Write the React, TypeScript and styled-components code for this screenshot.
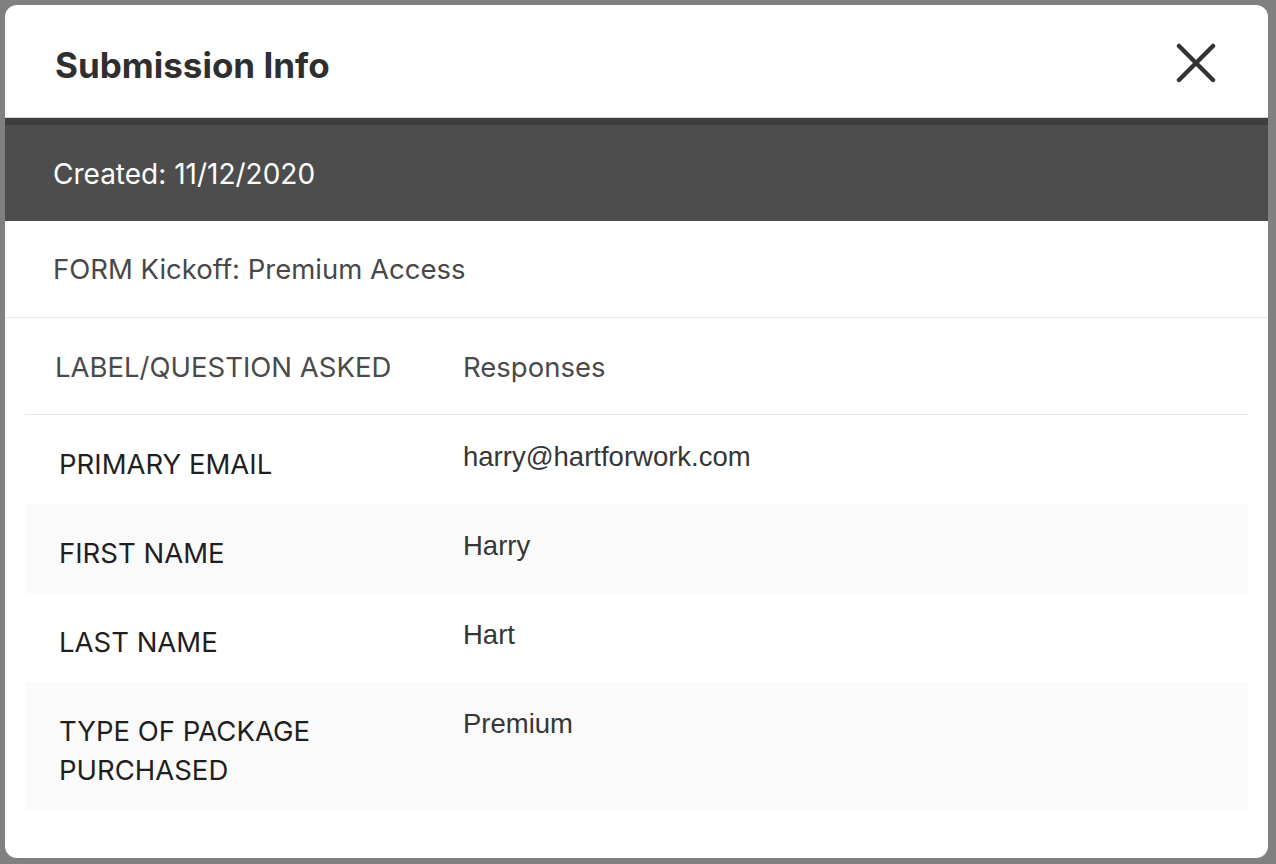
import React from "react";
import styled, { createGlobalStyle } from "styled-components";

const GlobalStyle = createGlobalStyle`
  html, body {
    margin: 0;
    padding: 0;
    background: #808080;
  }
  body {
    font-family: Inter, "Noto Sans", "Liberation Sans", sans-serif;
    -webkit-font-smoothing: antialiased;
  }
  * { box-sizing: border-box; }
`;

const Backdrop = styled.div`
  width: 1276px;
  height: 864px;
  padding: 5px 8px 6px 5px;
  background: #808080;
`;

const Modal = styled.div`
  width: 100%;
  height: 100%;
  background: #ffffff;
  border-radius: 12px;
  overflow: hidden;
  display: flex;
  flex-direction: column;
`;

const Header = styled.header`
  height: 113px;
  display: flex;
  align-items: center;
  justify-content: space-between;
  padding: 0 50px 0 50px;
  border-bottom: 1px solid #cfcfcf;
`;

const Title = styled.h1`
  margin: 8px 0 0 0;
  font-size: 35px;
  font-weight: 700;
  color: #2f2f2f;
  letter-spacing: 0;
`;

const CloseButton = styled.button`
  border: 0;
  background: transparent;
  padding: 0;
  width: 44px;
  height: 44px;
  display: flex;
  align-items: center;
  justify-content: center;
  cursor: pointer;
  margin-top: 4px;
`;

const CreatedBar = styled.div`
  height: 103px;
  background: #4d4d4d;
  border-top: 7px solid #3e3e3e;
  display: flex;
  align-items: center;
  padding: 2px 48px 0;
  color: #ffffff;
  font-size: 28px;
  font-weight: 400;
`;

const FormName = styled.div`
  height: 97px;
  display: flex;
  align-items: center;
  padding: 0 48px;
  font-size: 27.5px;
  color: #484848;
  border-bottom: 1px solid #e6e8eb;
`;

const Table = styled.div`
  margin: 0 20px;
  display: grid;
  grid-template-columns: 438px 1fr;
`;

const HeadCell = styled.div<{ $first?: boolean }>`
  height: 97px;
  display: flex;
  align-items: center;
  padding-left: ${(p) => (p.$first ? "30px" : "0")};
  padding-top: 1px;
  font-size: 27.5px;
  color: #4a4a4a;
  border-bottom: 1px solid #e6e8eb;
`;

const Row = styled.div<{ $striped?: boolean }>`
  display: contents;
  & > div {
    background: ${(p) => (p.$striped ? "#fafafa" : "#ffffff")};
  }
`;

const LabelCell = styled.div`
  padding: 30px 20px 20px 34px;
  font-size: 27.5px;
  line-height: 39px;
  color: #1f1f1f;
  text-transform: uppercase;
`;

const ValueCell = styled.div`
  padding: 22px 20px 20px 0;
  font-family: "Liberation Sans", Arial, sans-serif;
  font-size: 27.5px;
  line-height: 39px;
  color: #363636;
`;

const rows = [
  { label: "Primary Email", value: "harry@hartforwork.com" },
  { label: "First Name", value: "Harry" },
  { label: "Last Name", value: "Hart" },
  { label: "Type of Package Purchased", value: "Premium" },
];

const CloseIcon = () => (
  <svg width="40" height="40" viewBox="0 0 40 40" fill="none">
    <path
      d="M3 3 L37 37 M37 3 L3 37"
      stroke="#333333"
      strokeWidth="4.5"
      strokeLinecap="round"
    />
  </svg>
);

export default function App() {
  return (
    <>
      <GlobalStyle />
      <Backdrop>
        <Modal>
          <Header>
            <Title>Submission Info</Title>
            <CloseButton aria-label="Close">
              <CloseIcon />
            </CloseButton>
          </Header>
          <CreatedBar>Created: 11/12/2020</CreatedBar>
          <FormName>FORM Kickoff: Premium Access</FormName>
          <Table>
            <HeadCell $first>LABEL/QUESTION ASKED</HeadCell>
            <HeadCell>Responses</HeadCell>
            {rows.map((r, i) => (
              <Row key={r.label} $striped={i % 2 === 1}>
                <LabelCell>{r.label}</LabelCell>
                <ValueCell>{r.value}</ValueCell>
              </Row>
            ))}
          </Table>
        </Modal>
      </Backdrop>
    </>
  );
}
